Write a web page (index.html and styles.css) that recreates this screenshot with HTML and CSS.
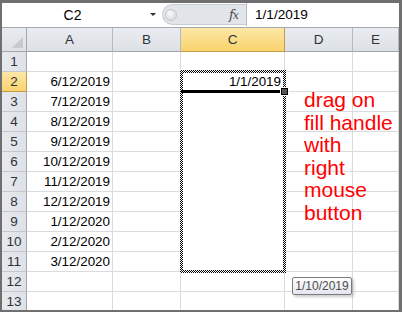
FILE: index.html
```html
<!DOCTYPE html>
<html lang="en">
<head>
    <meta charset="UTF-8">
    <title>Fill handle - right drag</title>
    <link rel="stylesheet" href="styles.css">
</head>
<body>
    <div class="window">
        <div class="formula-bar">
            <div class="name-box"><span class="name">C2</span><span class="arrow"></span></div>
            <div class="grip"><span class="dimple"></span><span class="fx"><i>f</i><i class="fx-x">x</i></span></div>
            <div class="formula">1/1/2019</div>
        </div>
        <div class="sheet">
            <div class="row head">
                <div class="corner"></div>
                <div class="ch">A</div>
                <div class="ch">B</div>
                <div class="ch active">C</div>
                <div class="ch">D</div>
                <div class="ch">E</div>
            </div>
            <div class="row"><div class="rh">1</div><div class="c"></div><div class="c"></div><div class="c"></div><div class="c"></div><div class="c"></div></div>
            <div class="row"><div class="rh active">2</div><div class="c num">6/12/2019</div><div class="c"></div><div class="c"></div><div class="c"></div><div class="c"></div></div>
            <div class="row"><div class="rh">3</div><div class="c num">7/12/2019</div><div class="c"></div><div class="c"></div><div class="c"></div><div class="c"></div></div>
            <div class="row"><div class="rh">4</div><div class="c num">8/12/2019</div><div class="c"></div><div class="c"></div><div class="c"></div><div class="c"></div></div>
            <div class="row"><div class="rh">5</div><div class="c num">9/12/2019</div><div class="c"></div><div class="c"></div><div class="c"></div><div class="c"></div></div>
            <div class="row"><div class="rh">6</div><div class="c num">10/12/2019</div><div class="c"></div><div class="c"></div><div class="c"></div><div class="c"></div></div>
            <div class="row"><div class="rh">7</div><div class="c num">11/12/2019</div><div class="c"></div><div class="c"></div><div class="c"></div><div class="c"></div></div>
            <div class="row"><div class="rh">8</div><div class="c num">12/12/2019</div><div class="c"></div><div class="c"></div><div class="c"></div><div class="c"></div></div>
            <div class="row"><div class="rh">9</div><div class="c num">1/12/2020</div><div class="c"></div><div class="c"></div><div class="c"></div><div class="c"></div></div>
            <div class="row"><div class="rh">10</div><div class="c num">2/12/2020</div><div class="c"></div><div class="c"></div><div class="c"></div><div class="c"></div></div>
            <div class="row"><div class="rh">11</div><div class="c num">3/12/2020</div><div class="c"></div><div class="c"></div><div class="c"></div><div class="c"></div></div>
            <div class="row"><div class="rh">12</div><div class="c"></div><div class="c"></div><div class="c"></div><div class="c"></div><div class="c"></div></div>
            <div class="row"><div class="rh">13</div><div class="c"></div><div class="c"></div><div class="c"></div><div class="c"></div><div class="c"></div></div>

            <div class="selection">
                <div class="sel-inner">
                    <div class="sel-value">1/1/2019</div>
                    <div class="sel-bar"><span class="fill-handle"></span></div>
                </div>
            </div>
            <div class="note">drag on<br>fill handle<br>with<br>right<br>mouse<br>button</div>
            <div class="tip">1/10/2019</div>
        </div>
    </div>
</body>
</html>
```

FILE: styles.css
```css
body {
    margin: 0;
    font-family: "Liberation Sans", Arial, sans-serif;
    background: #fff;
}
.window {
    width: 402px;
    height: 312px;
    box-sizing: border-box;
    border-style: solid;
    border-color: #6f6f6f;
    border-width: 3px 3px 2px 2px;
    overflow: hidden;
    display: flex;
    flex-direction: column;
}

/* formula bar */
.formula-bar {
    display: flex;
    height: 25px;
    flex: 0 0 25px;
    box-sizing: border-box;
    border-bottom: 1px solid #a3aab3;
    padding-bottom: 1px;
    background: #fff;
}
.name-box {
    width: 160px;
    display: flex;
    align-items: center;
    background: #fff;
}
.name {
    width: 141px;
    text-align: center;
    font-size: 14px;
    color: #000;
}
.arrow {
    margin-left: 7px;
    width: 0;
    height: 0;
    border-left: 3px solid transparent;
    border-right: 3px solid transparent;
    border-top: 3px solid #333;
}
.grip {
    width: 84px;
    margin: 1px 0;
    display: flex;
    align-items: center;
    box-sizing: border-box;
    background: #e1e4e8;
    border: 1px solid #c8cdd3;
    border-right: none;
    border-radius: 11px 0 0 11px;
    padding-left: 2px;
}
.dimple {
    width: 10px;
    height: 10px;
    border-radius: 50%;
    background: radial-gradient(circle at 40% 35%, #fafafa, #cfd3d8);
    border: 1px solid #c3c7cc;
}
.fx {
    margin-left: auto;
    margin-right: 8px;
    font-family: "DejaVu Serif", "Liberation Serif", serif;
    font-size: 13px;
    color: #4a4a4a;
    letter-spacing: -1px;
}
.fx-x {
    font-size: 11px;
}
.formula {
    flex: 1;
    border-left: 1px solid #b9bec5;
    padding-left: 8px;
    font-size: 13.6px;
    line-height: 23px;
    color: #000;
}

/* sheet */
.sheet {
    position: relative;
    flex: 1;
    overflow: hidden;
}
.row {
    display: grid;
    grid-template-columns: 25px 86px 68px 104px 68px 1fr;
    height: 20px;
}
.row.head {
    height: 24px;
}
.row > div {
    box-sizing: border-box;
}
.corner {
    position: relative;
    background: linear-gradient(#e8ebef, #dde1e6);
    border-right: 1px solid #9ea6b0;
    border-bottom: 1px solid #9ea6b0;
}
.corner::after {
    content: "";
    position: absolute;
    right: 3px;
    bottom: 3px;
    width: 0;
    height: 0;
    border-left: 11px solid transparent;
    border-bottom: 11px solid #c6cad0;
}
.ch {
    background: linear-gradient(#e9ecf0, #dde1e6);
    border-right: 1px solid #b4bac2;
    border-bottom: 1px solid #9ea6b0;
    text-align: center;
    font-size: 13.5px;
    line-height: 23px;
    color: #2f3338;
}
.ch.active,
.rh.active {
    background: linear-gradient(#fde7a8, #f9d36c);
    border-color: #c29b49;
}
.rh {
    background: linear-gradient(90deg, #e6e9ed, #dee2e7);
    border-right: 1px solid #9ea6b0;
    border-bottom: 1px solid #c3c8cf;
    text-align: center;
    font-size: 13.5px;
    line-height: 19px;
    color: #2f3338;
}
.c {
    border-right: 1px solid #dadbdc;
    border-bottom: 1px solid #dadbdc;
    font-size: 13.4px;
    line-height: 19px;
    color: #000;
}
.num {
    text-align: right;
    padding-right: 2px;
}

/* copy/fill selection with marching ants */
.selection {
    position: absolute;
    left: 178px;
    top: 42px;
    width: 106px;
    height: 203px;
    padding: 3px;
    box-sizing: border-box;
    background: repeating-conic-gradient(#000 0% 25%, #fff 0% 50%) 0 0 / 2px 2px;
}
.sel-inner {
    height: 100%;
    background: #fff;
}
.sel-value {
    height: 17px;
    line-height: 17px;
    text-align: right;
    padding-right: 2px;
    font-size: 13.4px;
}
.sel-bar {
    position: relative;
    height: 3px;
    margin-left: -2px;
    background: #000;
}
.fill-handle {
    position: absolute;
    right: -5px;
    top: -2px;
    width: 5px;
    height: 5px;
    background: #555;
    border: 1px solid #000;
    outline: 1px solid #fff;
}

.note {
    position: absolute;
    left: 302px;
    top: 61px;
    font-size: 21px;
    line-height: 22.6px;
    color: #ff0000;
    white-space: nowrap;
}
.tip {
    position: absolute;
    left: 290px;
    top: 249px;
    width: 60px;
    height: 18px;
    box-sizing: border-box;
    border: 1px solid #7b7b7b;
    border-radius: 2px;
    background: linear-gradient(#ffffff, #e4e5ef);
    box-shadow: 2px 2px 3px rgba(0, 0, 0, 0.2);
    font-size: 12px;
    line-height: 16px;
    text-align: center;
    color: #4d4d4d;
}
```
